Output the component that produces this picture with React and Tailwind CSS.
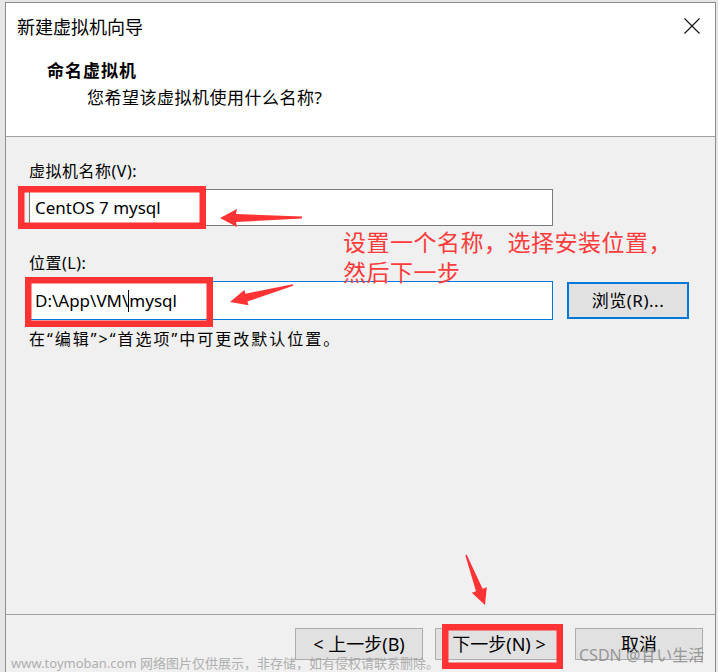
export default function App() {
  const font = { fontFamily: '"Noto Sans", "Noto Sans CJK SC", sans-serif' };
  return (
    <div className="relative w-[718px] h-[672px] overflow-hidden bg-[#e6e6e6] pt-[2px] pl-[5px]" style={font}>
      <div className="w-[711px] h-[670px] border-l border-t border-r border-[#8c8c8c] bg-[#f0f0f0] flex flex-col text-black">
        {/* Header */}
        <div className="h-[134px] bg-white border-b border-[#a0a0a0] relative">
          <div className="absolute left-[11px] top-[11px] text-[18px] leading-[26px]">新建虚拟机向导</div>
          <svg className="absolute left-[678px] top-[15px]" width="16" height="16" viewBox="0 0 16 16">
            <path d="M0.5 0.5L15.5 15.5M15.5 0.5L0.5 15.5" stroke="#111" strokeWidth="1.1" fill="none" />
          </svg>
          <div className="pt-[55px] pl-[41px] text-[17px] leading-[26px] font-bold tracking-[1px]">命名虚拟机</div>
          <div className="pl-[81px] text-[17px] leading-[26px] mt-[1px] tracking-[0.5px]">您希望该虚拟机使用什么名称?</div>
        </div>

        {/* Body */}
        <div className="h-[478px] border-b border-[#a0a0a0] pl-[23px] pt-[23px] text-[16px] tracking-[0.5px]">
          <div className="leading-[22px]">虚拟机名称(V):</div>
          <div className="mt-[7px] w-[524px] h-[37px] bg-white border border-[#7a7a7a] flex items-center pl-[5px] text-[17px] tracking-normal">
            CentOS 7 mysql
          </div>
          <div className="mt-[26px] leading-[22px]">位置(L):</div>
          <div className="mt-[7px] flex items-center gap-[14px]">
            <div className="w-[524px] h-[39px] bg-white border border-[#0078d7] flex items-center pl-[5px] text-[17px] tracking-normal">
              <span>D:\App\VM\</span>
              <span className="w-px h-[22px] bg-black"></span>
              <span>mysql</span>
            </div>
            <button className="w-[122px] h-[37px] bg-[#e1e1e1] border-2 border-[#0078d7] text-[17px] flex items-center justify-center">
              浏览(R)...
            </button>
          </div>
          <div className="mt-[8px] leading-[22px] tracking-[2px]">在“编辑”&gt;“首选项”中可更改默认位置。</div>
        </div>

        {/* Footer */}
        <div className="flex justify-end gap-[12px] pr-[12px] pt-[13px]">
          <button className="w-[128px] h-[32px] bg-[#e1e1e1] border border-[#adadad] text-[18px]">&lt; 上一步(B)</button>
          <button className="w-[128px] h-[32px] bg-[#e1e1e1] border border-[#adadad] text-[18px]">下一步(N) &gt;</button>
          <button className="w-[128px] h-[32px] bg-[#e1e1e1] border border-[#adadad] text-[18px]">取消</button>
        </div>
      </div>

      {/* Annotation text */}
      <div className="absolute left-[343px] top-[227px] text-[23px] leading-[30px] text-[#ff3b3b] tracking-[0.5px]">
        <div>设置一个名称，选择安装位置，</div>
        <div>然后下一步</div>
      </div>

      {/* Annotation boxes and arrows */}
      <svg className="absolute left-0 top-0 pointer-events-none" width="718" height="672" viewBox="0 0 718 672">
        <g fill="none" stroke="#ff3333" strokeWidth="6.5">
          <rect x="21.25" y="189.25" width="181.5" height="36.5" />
          <rect x="28.25" y="280.25" width="181.5" height="43.5" />
          <rect x="445.25" y="627.25" width="114.5" height="38.5" />
        </g>
        <g fill="#ff3333">
          <polygon points="220,218 237,209 236,214 302,216.5 302,218.5 236,222 237,227" />
          <polygon points="230,302 244.3,289.9 245.4,293.7 292.8,284.3 293.2,285.7 247.4,301.5 248.5,305.3" />
          <polygon points="485,605 471.8,592.8 476,591.2 465.3,555.25 466.7,554.75 482.6,588.8 486.8,587.2" />
        </g>
      </svg>

      {/* Watermarks */}
      <div className="absolute left-[11px] top-[654px] text-[13px] leading-[18px] text-[#a8a8a8] opacity-90 whitespace-nowrap">
        www.toymoban.com 网络图片仅供展示，非存储，如有侵权请联系删除。
      </div>
      <div className="absolute left-[579px] top-[644px] text-[16px] leading-[22px] text-[#8f8f8f] opacity-90 whitespace-nowrap">
        CSDN @甘い生活
      </div>
    </div>
  );
}
